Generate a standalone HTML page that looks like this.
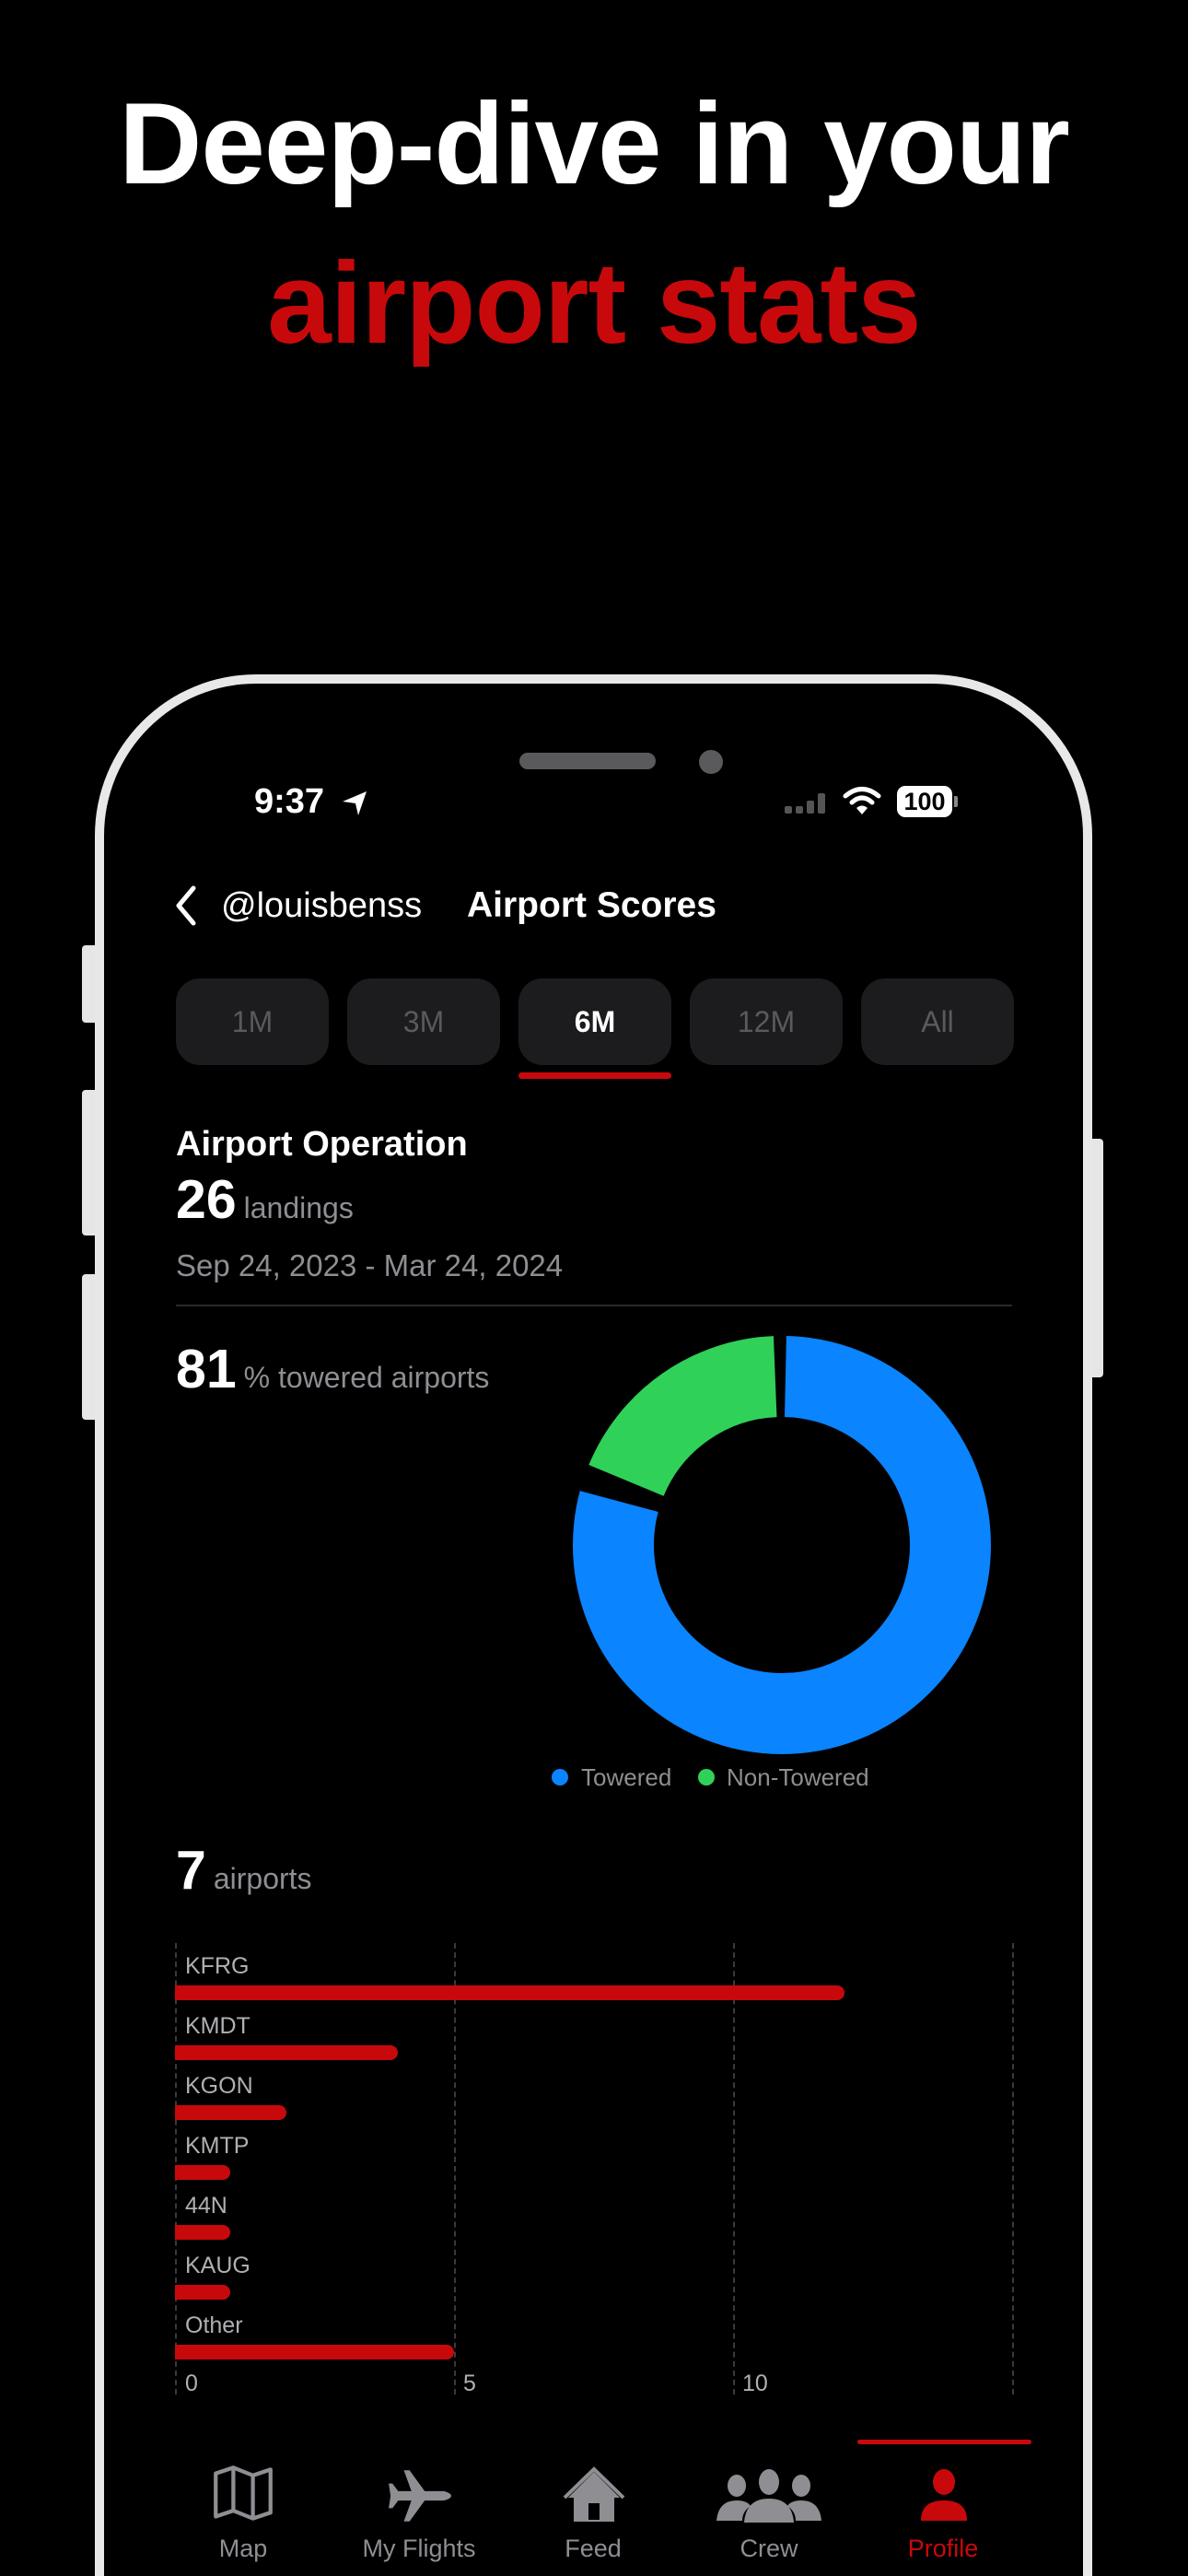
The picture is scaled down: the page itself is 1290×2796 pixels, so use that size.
<!DOCTYPE html>
<html><head><meta charset="utf-8"><style>
*{margin:0;padding:0;box-sizing:border-box}
html,body{width:1290px;height:2796px;overflow:hidden;background:#000}
body{font-family:"Liberation Sans",sans-serif;color:#fff}
#w{position:relative;width:1290px;height:2796px;overflow:hidden;background:#000}
.a{position:absolute;white-space:nowrap}
.h{left:0;width:1290px;text-align:center;font-weight:bold;font-size:125px;letter-spacing:-1px}
.seg{position:absolute;top:1062px;width:166px;height:94px;border-radius:26px;background:#1c1c1e;color:#5a5a5e;font-size:32px;text-align:center;line-height:94px}
.lbl{position:absolute;left:201px;font-size:25px;color:#b0b0b4;line-height:30px}
.bar{position:absolute;left:190px;height:16px;background:#c8090b;border-radius:0 8px 8px 0}
.grid{position:absolute;top:2109px;height:490px;border-left:2px dashed #3a3a3c}
.tab{position:absolute;top:2748px;width:200px;text-align:center;font-size:27px;color:#8e8e93;line-height:36px}
.big{font-size:59px;font-weight:bold}
.sub{font-size:32px;color:#8e8e93;margin-left:8px}
</style></head><body><div id="w">
<div class="a h" style="top:92px;line-height:130px">Deep-dive in your</div>
<div class="a h" style="top:265px;line-height:130px;color:#c8090b">airport stats</div>

<!-- side buttons -->
<div class="a" style="left:89px;top:1026px;width:16px;height:84px;background:#e6e6e6;border-radius:4px 0 0 4px"></div>
<div class="a" style="left:89px;top:1183px;width:16px;height:158px;background:#e6e6e6;border-radius:4px 0 0 4px"></div>
<div class="a" style="left:89px;top:1383px;width:16px;height:158px;background:#e6e6e6;border-radius:4px 0 0 4px"></div>
<div class="a" style="left:1184px;top:1236px;width:14px;height:259px;background:#e6e6e6;border-radius:0 4px 4px 0"></div>
<!-- phone -->
<div class="a" style="left:103px;top:732px;width:1083px;height:2064px;border:10px solid #e8e8e8;border-bottom:0;border-radius:175px 175px 0 0;background:#000"></div>
<div class="a" style="left:564px;top:817px;width:148px;height:18px;border-radius:9px;background:#5a5a5c"></div>
<div class="a" style="left:759px;top:814px;width:26px;height:26px;border-radius:13px;background:#5a5a5c"></div>

<!-- status -->
<div class="a" style="left:276px;top:848px;font-size:38px;font-weight:bold;line-height:44px">9:37</div>
<svg class="a" style="left:370px;top:857px" width="32" height="30" viewBox="0 0 32 30"><path d="M2 13 L28 2 L19 28 L16 15 Z" fill="#fff"/></svg>
<svg class="a" style="left:852px;top:857px" width="48" height="26"><g fill="#555"><rect x="0" y="18" width="8" height="8" rx="2"/><rect x="12" y="18" width="8" height="8" rx="2"/><rect x="24" y="12" width="8" height="14" rx="2"/><rect x="36" y="4" width="8" height="22" rx="2"/></g></svg>
<svg class="a" style="left:915px;top:852px" width="42" height="34" viewBox="0 0 42 34"><g fill="none" stroke="#fff" stroke-width="5" stroke-linecap="round"><path d="M3 12 Q21 -3 39 12"/><path d="M10 19 Q21 9 32 19"/></g><path d="M15 25 Q21 20 27 25 L21 32 Z" fill="#fff"/></svg>
<div class="a" style="left:974px;top:853px;width:60px;height:34px;background:#fff;border-radius:9px;color:#000;font-weight:bold;font-size:27px;text-align:center;line-height:34px">100</div>
<div class="a" style="left:1036px;top:864px;width:4px;height:12px;background:#888;border-radius:0 2px 2px 0"></div>

<!-- nav -->
<svg class="a" style="left:188px;top:960px" width="28" height="46" viewBox="0 0 28 46"><path d="M22 4 L6 23 L22 42" fill="none" stroke="#fff" stroke-width="5" stroke-linecap="round" stroke-linejoin="round"/></svg>
<div class="a" style="left:240px;top:960px;font-size:38px;line-height:46px">@louisbenss</div>
<div class="a" style="left:507px;top:960px;font-size:39px;font-weight:bold;line-height:46px">Airport Scores</div>

<!-- segments -->
<div class="seg" style="left:191px">1M</div>
<div class="seg" style="left:377px">3M</div>
<div class="seg" style="left:563px;color:#fff;font-weight:bold">6M</div>
<div class="seg" style="left:749px">12M</div>
<div class="seg" style="left:935px">All</div>
<div class="a" style="left:563px;top:1164px;width:166px;height:7px;background:#c8090b;border-radius:4px"></div>

<div class="a" style="left:191px;top:1219px;font-size:38px;font-weight:bold;line-height:46px">Airport Operation</div>
<div class="a" style="left:191px;top:1272px;line-height:60px"><span class="big">26</span><span class="sub">landings</span></div>
<div class="a" style="left:191px;top:1354px;font-size:33px;color:#8e8e93;line-height:40px">Sep 24, 2023 - Mar 24, 2024</div>
<div class="a" style="left:191px;top:1416px;width:908px;height:2px;background:#2a2a2c"></div>
<div class="a" style="left:191px;top:1456px;line-height:60px"><span class="big">81</span><span class="sub">% towered airports</span></div>

<!-- donut -->
<svg class="a" style="left:600px;top:1428px" width="500" height="500" viewBox="0 0 500 500">
<g transform="rotate(-90 249 249)" fill="none" stroke-width="88">
<circle cx="249" cy="249" r="183" stroke="#0a84ff" stroke-dasharray="906 300" stroke-dashoffset="-4"/>
<circle cx="249" cy="249" r="183" stroke="#30d158" stroke-dasharray="208 1000" stroke-dashoffset="-934"/>
</g></svg>
<div class="a" style="left:599px;top:1920px;width:18px;height:18px;border-radius:9px;background:#0a84ff"></div>
<div class="a" style="left:631px;top:1912px;font-size:26px;color:#8e8e93;line-height:34px">Towered</div>
<div class="a" style="left:758px;top:1920px;width:18px;height:18px;border-radius:9px;background:#30d158"></div>
<div class="a" style="left:789px;top:1912px;font-size:26px;color:#8e8e93;line-height:34px">Non-Towered</div>

<div class="a" style="left:191px;top:2000px;line-height:60px"><span class="big">7</span><span class="sub">airports</span></div>

<!-- bar chart -->
<div class="grid" style="left:190px"></div>
<div class="grid" style="left:493px"></div>
<div class="grid" style="left:796px"></div>
<div class="grid" style="left:1099px"></div>
<div class="lbl" style="top:2119px">KFRG</div><div class="bar" style="top:2155px;width:727px"></div>
<div class="lbl" style="top:2184px">KMDT</div><div class="bar" style="top:2220px;width:242px"></div>
<div class="lbl" style="top:2249px">KGON</div><div class="bar" style="top:2285px;width:121px"></div>
<div class="lbl" style="top:2314px">KMTP</div><div class="bar" style="top:2350px;width:60px"></div>
<div class="lbl" style="top:2379px">44N</div><div class="bar" style="top:2415px;width:60px"></div>
<div class="lbl" style="top:2444px">KAUG</div><div class="bar" style="top:2480px;width:60px"></div>
<div class="lbl" style="top:2509px">Other</div><div class="bar" style="top:2545px;width:303px"></div>
<div class="lbl" style="top:2572px">0</div>
<div class="lbl" style="top:2572px;left:503px">5</div>
<div class="lbl" style="top:2572px;left:806px">10</div>

<!-- tab bar -->
<div class="a" style="left:931px;top:2648px;width:189px;height:5px;background:#c8090b;border-radius:3px"></div>
<svg class="a" style="left:230px;top:2676px" width="68" height="62" viewBox="0 0 64 58"><path d="M4 8 L22 2 L42 10 L60 4 L60 48 L42 54 L22 46 L4 52 Z M22 2 L22 46 M42 10 L42 54" fill="none" stroke="#8e8e93" stroke-width="4" stroke-linejoin="round"/></svg>
<svg class="a" style="left:420px;top:2678px" width="72" height="62" viewBox="0 0 70 58"><path d="M18 2 L24 2 L40 24 L60 24 Q68 26 68 29 Q68 32 60 34 L40 34 L24 56 L18 56 L26 34 L12 34 L6 42 L2 42 L4 29 L2 16 L6 16 L12 24 L26 24 Z" fill="#8e8e93"/></svg>
<svg class="a" style="left:609px;top:2676px" width="72" height="64" viewBox="0 0 72 62"><path d="M36 6 L8 34 L14 34 L14 60 L58 60 L58 34 L64 34 Z M30 40 L42 40 L42 58 L30 58 Z" fill="#8e8e93" fill-rule="evenodd"/><path d="M4 34 L36 3 L68 34" fill="none" stroke="#8e8e93" stroke-width="4"/></svg>
<svg class="a" style="left:778px;top:2680px" width="114" height="58" viewBox="0 0 114 58"><g fill="#8e8e93"><ellipse cx="57" cy="14" rx="11" ry="14"/><ellipse cx="22" cy="18" rx="10" ry="12"/><ellipse cx="92" cy="18" rx="10" ry="12"/><path d="M30 58 Q32 32 57 32 Q82 32 84 58 Z"/><path d="M0 56 Q2 34 22 34 Q33 34 37 40 Q28 46 28 56 Z"/><path d="M114 56 Q112 34 92 34 Q81 34 77 40 Q86 46 86 56 Z"/></g></svg>
<svg class="a" style="left:998px;top:2680px" width="54" height="58" viewBox="0 0 54 58"><g fill="#c8090b"><ellipse cx="27" cy="14" rx="12" ry="14"/><path d="M2 56 Q2 34 27 34 Q52 34 52 56 Z"/></g></svg>
<div class="tab" style="left:164px">Map</div>
<div class="tab" style="left:355px">My Flights</div>
<div class="tab" style="left:544px">Feed</div>
<div class="tab" style="left:735px">Crew</div>
<div class="tab" style="left:924px;color:#c8090b">Profile</div>
</div></body></html>
